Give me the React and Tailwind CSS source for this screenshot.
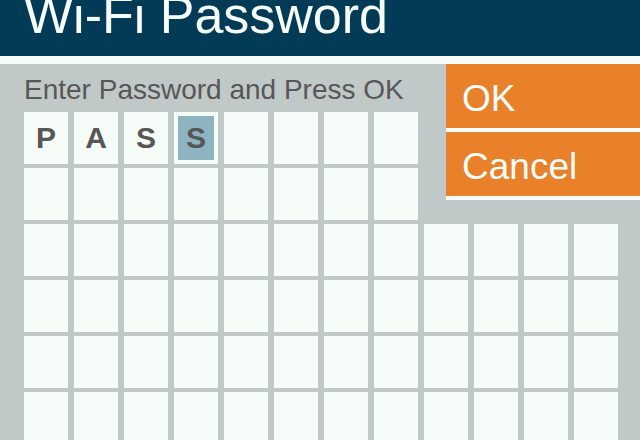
import React from 'react';

const letters = ['P', 'A', 'S', 'S'];
const activeIndex = 3;

const Cell = ({ char, active }) => {
  if (active) {
    return (
      <div className="bg-[#f6fcf8] p-[4px]">
        <div className="flex h-full w-full items-center justify-center bg-[#8fb4c1] text-[30px] font-bold leading-none text-[#575757]">
          {char}
        </div>
      </div>
    );
  }
  return (
    <div className="flex items-center justify-center bg-[#f6fcf8] text-[30px] font-bold leading-none text-[#575757]">
      {char}
    </div>
  );
};

export default function App() {
  const topCells = Array.from({ length: 16 }, (_, i) => letters[i] || '');
  const bottomCells = Array.from({ length: 48 });

  return (
    <div className="h-[440px] w-[640px] overflow-hidden bg-[#c0c9c8] font-['Liberation_Sans',Arial,sans-serif]">
      {/* Header */}
      <div className="h-[56px] overflow-hidden bg-[#033a56] pl-[24px]">
        <h1 className="-mt-[11px] whitespace-nowrap text-[52px] leading-[52px] text-[#f6fcf8]">
          Wi-Fi Password
        </h1>
      </div>
      <div className="h-[8px] bg-[#f6fcf8]" />

      {/* Entry + buttons */}
      <div className="flex">
        <div className="pl-[24px]">
          <div className="h-[48px] whitespace-nowrap pt-[12px] text-[28px] leading-[28px] text-[#575757]">
            Enter Password and Press OK
          </div>
          <div className="grid auto-rows-[52px] grid-cols-[repeat(8,44px)] gap-x-[6px] gap-y-[4px]">
            {topCells.map((c, i) => (
              <Cell key={i} char={c} active={i === activeIndex} />
            ))}
          </div>
        </div>

        <div className="ml-auto w-[194px]">
          <div className="h-[68px] border-b-4 border-[#f6fcf8] bg-[#e8812a] pl-[16px] pt-[16px] text-[37px] leading-[37px] text-[#f6fcf8]">
            OK
          </div>
          <div className="h-[68px] border-b-4 border-[#f6fcf8] bg-[#e8812a] pl-[16px] pt-[16px] text-[37px] leading-[37px] text-[#f6fcf8]">
            Cancel
          </div>
        </div>
      </div>

      {/* Remaining grid */}
      <div className="mt-[4px] grid auto-rows-[52px] grid-cols-[repeat(12,44px)] gap-x-[6px] gap-y-[4px] pl-[24px]">
        {bottomCells.map((_, i) => (
          <Cell key={i} char="" />
        ))}
      </div>
    </div>
  );
}
